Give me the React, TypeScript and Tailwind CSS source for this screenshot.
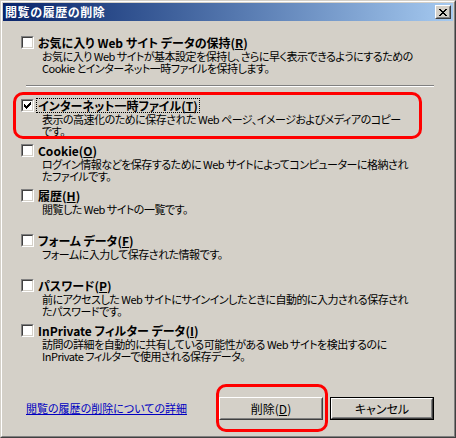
import React from 'react';

const FONT = "[font-family:'Noto_Sans_CJK_JP','Noto_Sans',sans-serif] [font-feature-settings:'palt']";

function CheckBox({ checked }: { checked?: boolean }) {
  return (
    <div className="w-[13px] h-[13px] shrink-0 border border-t-[#808080] border-l-[#808080] border-b-white border-r-white">
      <div className="w-full h-full border border-t-[#404040] border-l-[#404040] border-b-[#d4d0c8] border-r-[#d4d0c8] bg-white flex items-center justify-center">
        {checked && (
          <svg width="7" height="7" viewBox="0 0 7 7" shapeRendering="crispEdges">
            <path d="M0 2h1v3h-1zM1 3h1v3h-1zM2 4h1v3h-1zM3 3h1v3h-1zM4 2h1v3h-1zM5 1h1v3h-1zM6 0h1v3h-1z" fill="#000" />
          </svg>
        )}
      </div>
    </div>
  );
}

function Item({
  title,
  lines,
  checked,
  focused,
}: {
  title: React.ReactNode;
  lines: React.ReactNode[];
  checked?: boolean;
  focused?: boolean;
}) {
  return (
    <div className="h-[45px]">
      <div className="flex items-center h-[14px] gap-[3px]">
        <CheckBox checked={checked} />
        <span
          className={`font-bold text-[12px] leading-[13px] whitespace-nowrap px-[1px] ${
            focused ? 'outline outline-1 outline-dotted outline-black' : ''
          }`}
        >
          {title}
        </span>
      </div>
      <div className="ml-[21px] mt-[1px] text-[11px] leading-[12px] tracking-[-0.5px] whitespace-nowrap">
        {lines.map((l, i) => (
          <div key={i}>{l}</div>
        ))}
      </div>
    </div>
  );
}

function Btn({ children, isDefault }: { children: React.ReactNode; isDefault?: boolean }) {
  return (
    <div className={`w-[104px] h-[23px] ${isDefault ? 'border border-black' : ''}`}>
      <div className="w-full h-full border border-t-white border-l-white border-b-[#404040] border-r-[#404040]">
        <div className="w-full h-full border border-t-[#d4d0c8] border-l-[#d4d0c8] border-b-[#808080] border-r-[#808080] flex items-center justify-center text-[12px]">
          {children}
        </div>
      </div>
    </div>
  );
}

export default function App() {
  return (
    <div className={`${FONT} w-[456px] h-[438px] bg-[#d4d0c8] text-black border border-t-[#d4d0c8] border-l-[#d4d0c8] border-b-[#404040] border-r-[#404040] relative overflow-hidden`}>
      <div className="w-full h-full border border-t-white border-l-white border-b-[#808080] border-r-[#808080] p-[1px] flex flex-col">
        {/* Title bar */}
        <div className="h-[18px] shrink-0 bg-gradient-to-r from-[#0a246a] to-[#a6caf0] flex items-center pl-[2px] pr-[2px]">
          <span className="text-white font-bold text-[12px] tracking-[0.6px] leading-none">閲覧の履歴の削除</span>
          <div className="ml-auto w-[16px] h-[14px] border border-t-white border-l-white border-b-[#404040] border-r-[#404040]">
            <div className="w-full h-full border border-t-[#d4d0c8] border-l-[#d4d0c8] border-b-[#808080] border-r-[#808080] bg-[#d4d0c8] flex items-center justify-center">
              <svg width="8" height="7" viewBox="0 0 8 7" shapeRendering="crispEdges">
                <path d="M0 0h2v1h-2zM6 0h2v1h-2zM1 1h2v1h-2zM5 1h2v1h-2zM2 2h4v1h-4zM3 3h2v1h-2zM2 4h4v1h-4zM1 5h2v1h-2zM5 5h2v1h-2zM0 6h2v1h-2zM6 6h2v1h-2z" fill="#000" />
              </svg>
            </div>
          </div>
        </div>

        {/* Body */}
        <div className="flex-1 flex flex-col pl-[18px] pt-[14px]">
          <div className="h-[50px]">
            <Item
              title={<>お気に入り Web サイト データの保持(<u>R</u>)</>}
              lines={[
                'お気に入り Web サイトが基本設定を保持し、さらに早く表示できるようにするための',
                'Cookie とインターネット一時ファイルを保持します。',
              ]}
            />
          </div>
          <div className="ml-[5px] w-[408px] h-[2px] border-t border-t-[#808080] border-b border-b-white" />
          <div className="mt-[11px]">
            <Item
              checked
              focused
              title={<>インターネット一時ファイル(<u>T</u>)</>}
              lines={[
                '表示の高速化のために保存された Web ページ、イメージおよびメディアのコピー',
                'です。',
              ]}
            />
            <Item
              title={<>Cookie(<u>O</u>)</>}
              lines={[
                'ログイン情報などを保存するために Web サイトによってコンピューターに格納され',
                'たファイルです。',
              ]}
            />
            <Item title={<>履歴(<u>H</u>)</>} lines={['閲覧した Web サイトの一覧です。']} />
            <Item title={<>フォーム データ(<u>F</u>)</>} lines={['フォームに入力して保存された情報です。']} />
            <Item
              title={<>パスワード(<u>P</u>)</>}
              lines={[
                '前にアクセスした Web サイトにサインインしたときに自動的に入力される保存され',
                'たパスワードです。',
              ]}
            />
            <Item
              title={<>InPrivate フィルター データ(<u>I</u>)</>}
              lines={[
                '訪問の詳細を自動的に共有している可能性がある Web サイトを検出するのに',
                'InPrivate フィルターで使用される保存データ。',
              ]}
            />
          </div>

          <div className="mt-[29px] flex items-center pr-[19px]">
            <span className="ml-[5px] text-[11px] text-[#0000c0] underline">閲覧の履歴の削除についての詳細</span>
            <div className="ml-auto flex gap-[7px]">
              <Btn>
                削除(<u>D</u>)
              </Btn>
              <Btn isDefault>キャンセル</Btn>
            </div>
          </div>
        </div>
      </div>

      {/* Red annotation outlines */}
      <div className="absolute left-[12px] top-[91px] w-[409px] h-[47px] border-[3px] border-[#ff0000] rounded-[10px] pointer-events-none" />
      <div className="absolute left-[215px] top-[383px] w-[112px] h-[48px] border-[3px] border-[#ff0000] rounded-[10px] pointer-events-none" />
    </div>
  );
}
